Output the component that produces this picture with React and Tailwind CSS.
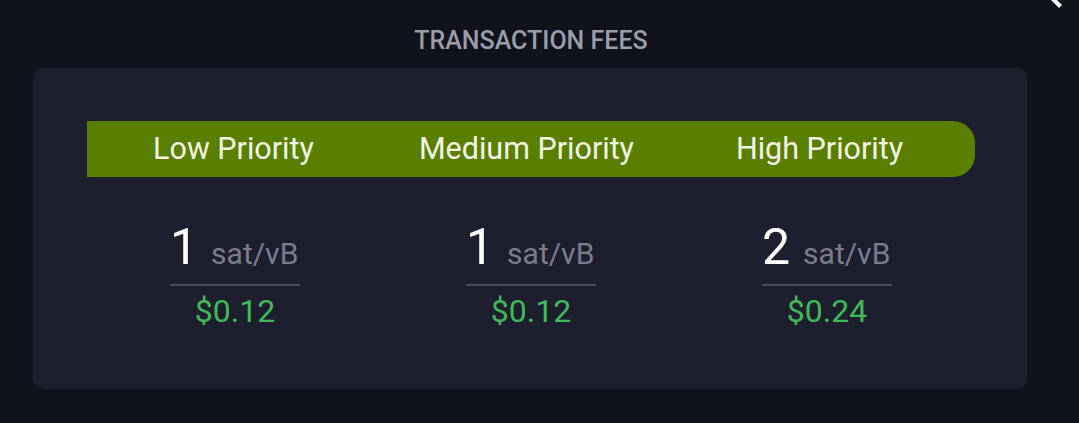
export default function App() {
  const cols = [
    { label: "Low Priority", rate: "1", usd: "$0.12" },
    { label: "Medium Priority", rate: "1", usd: "$0.12" },
    { label: "High Priority", rate: "2", usd: "$0.24" },
  ];
  return (
    <div
      className="relative w-[1079px] h-[423px] bg-[#10121c] overflow-hidden"
      style={{ fontFamily: "Roboto, 'Noto Sans', sans-serif" }}
    >
      <svg className="absolute left-[1048px] top-0" width="16" height="10" viewBox="0 0 16 10">
        <polygon points="3,0 9,0 14,5 11,8" fill="#f5f5f5" />
      </svg>
      <div className="flex flex-col pt-[28px]">
        <div className="w-[1062px] text-center text-[25px] leading-none font-medium text-[#9b9da8]">
          TRANSACTION FEES
        </div>
        <div className="mt-[15px] ml-[33px] w-[994px] h-[321px] rounded-[10px] bg-[#1d1e2e] shadow-[0_0_2px_rgba(255,255,255,0.04)] px-[54px] pt-[53px]">
          <div className="w-[888px] h-[56px] bg-[#5a7e00] rounded-r-[22px] grid grid-cols-3 items-center pr-[9px]">
            {cols.map((c) => (
              <div key={c.label} className="text-center text-[30.5px] leading-none text-[#f1f5e4]">
                {c.label}
              </div>
            ))}
          </div>
          <div className="w-[888px] grid grid-cols-3 mt-[45px]">
            {cols.map((c, i) => (
              <div key={i} className="flex flex-col items-center">
                <div className="flex items-baseline gap-[13px] w-[130px] pb-[12px] border-b-[2px] border-[#4a4c5f]">
                  <span className="text-[50px] leading-none text-white">{c.rate}</span>
                  <span className="text-[30px] leading-none text-[#7a7c8b]">sat/vB</span>
                </div>
                <div className="mt-[9px] text-[32px] leading-none text-[#3fba57]">{c.usd}</div>
              </div>
            ))}
          </div>
        </div>
      </div>
    </div>
  );
}
